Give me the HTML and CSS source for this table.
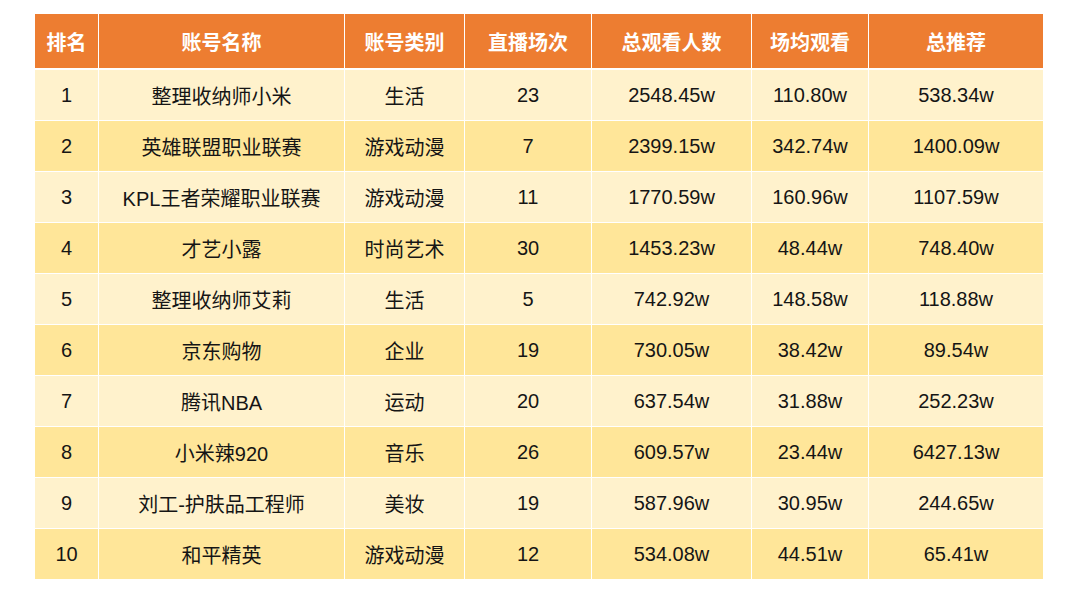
FILE: index.html
```html
<!DOCTYPE html>
<html lang="zh-CN">
<head>
<meta charset="utf-8">
<title>直播账号排名</title>
<link rel="stylesheet" href="styles.css">
</head>
<body>
<table class="rank">
  <colgroup>
    <col class="c1"><col class="c2"><col class="c3"><col class="c4"><col class="c5"><col class="c6"><col class="c7">
  </colgroup>
  <thead>
    <tr><th>排名</th><th>账号名称</th><th>账号类别</th><th>直播场次</th><th>总观看人数</th><th>场均观看</th><th>总推荐</th></tr>
  </thead>
  <tbody>
    <tr><td>1</td><td>整理收纳师小米</td><td>生活</td><td>23</td><td>2548.45w</td><td>110.80w</td><td>538.34w</td></tr>
    <tr><td>2</td><td>英雄联盟职业联赛</td><td>游戏动漫</td><td>7</td><td>2399.15w</td><td>342.74w</td><td>1400.09w</td></tr>
    <tr><td>3</td><td>KPL王者荣耀职业联赛</td><td>游戏动漫</td><td>11</td><td>1770.59w</td><td>160.96w</td><td>1107.59w</td></tr>
    <tr><td>4</td><td>才艺小露</td><td>时尚艺术</td><td>30</td><td>1453.23w</td><td>48.44w</td><td>748.40w</td></tr>
    <tr><td>5</td><td>整理收纳师艾莉</td><td>生活</td><td>5</td><td>742.92w</td><td>148.58w</td><td>118.88w</td></tr>
    <tr><td>6</td><td>京东购物</td><td>企业</td><td>19</td><td>730.05w</td><td>38.42w</td><td>89.54w</td></tr>
    <tr><td>7</td><td>腾讯NBA</td><td>运动</td><td>20</td><td>637.54w</td><td>31.88w</td><td>252.23w</td></tr>
    <tr><td>8</td><td>小米辣920</td><td>音乐</td><td>26</td><td>609.57w</td><td>23.44w</td><td>6427.13w</td></tr>
    <tr><td>9</td><td>刘工-护肤品工程师</td><td>美妆</td><td>19</td><td>587.96w</td><td>30.95w</td><td>244.65w</td></tr>
    <tr><td>10</td><td>和平精英</td><td>游戏动漫</td><td>12</td><td>534.08w</td><td>44.51w</td><td>65.41w</td></tr>
  </tbody>
</table>
</body>
</html>
```

FILE: styles.css
```css
html, body {
  margin: 0;
  padding: 0;
  background: #ffffff;
}

body {
  font-family: "Liberation Sans", "Noto Sans CJK SC", sans-serif;
}

.rank {
  margin: 14px 0 0 35px;
  width: 1008px;
  table-layout: fixed;
  border-collapse: separate;
  border-spacing: 0;
  font-size: 20px;
}

.c1 { width: 64px; }
.c2 { width: 246px; }
.c3 { width: 120px; }
.c4 { width: 127px; }
.c5 { width: 160px; }
.c6 { width: 117px; }
.c7 { width: 174px; }

.rank th,
.rank td {
  padding: 0;
  text-align: center;
  vertical-align: middle;
  white-space: nowrap;
  border-right: 1px solid #ffffff;
}

.rank th:last-child,
.rank td:last-child {
  border-right: none;
}

.rank th {
  height: 54px;
  background: #ed7d31;
  color: #ffffff;
  font-weight: bold;
  border-bottom: 2px solid #ffffff;
}

.rank td {
  height: 50px;
  color: #151515;
  border-bottom: 1px solid #ffffff;
}

.rank tbody tr:last-child td {
  border-bottom: none;
}

.rank tbody tr:nth-child(odd) td {
  background: #fff2cc;
}

.rank tbody tr:nth-child(even) td {
  background: #ffe699;
}
```
